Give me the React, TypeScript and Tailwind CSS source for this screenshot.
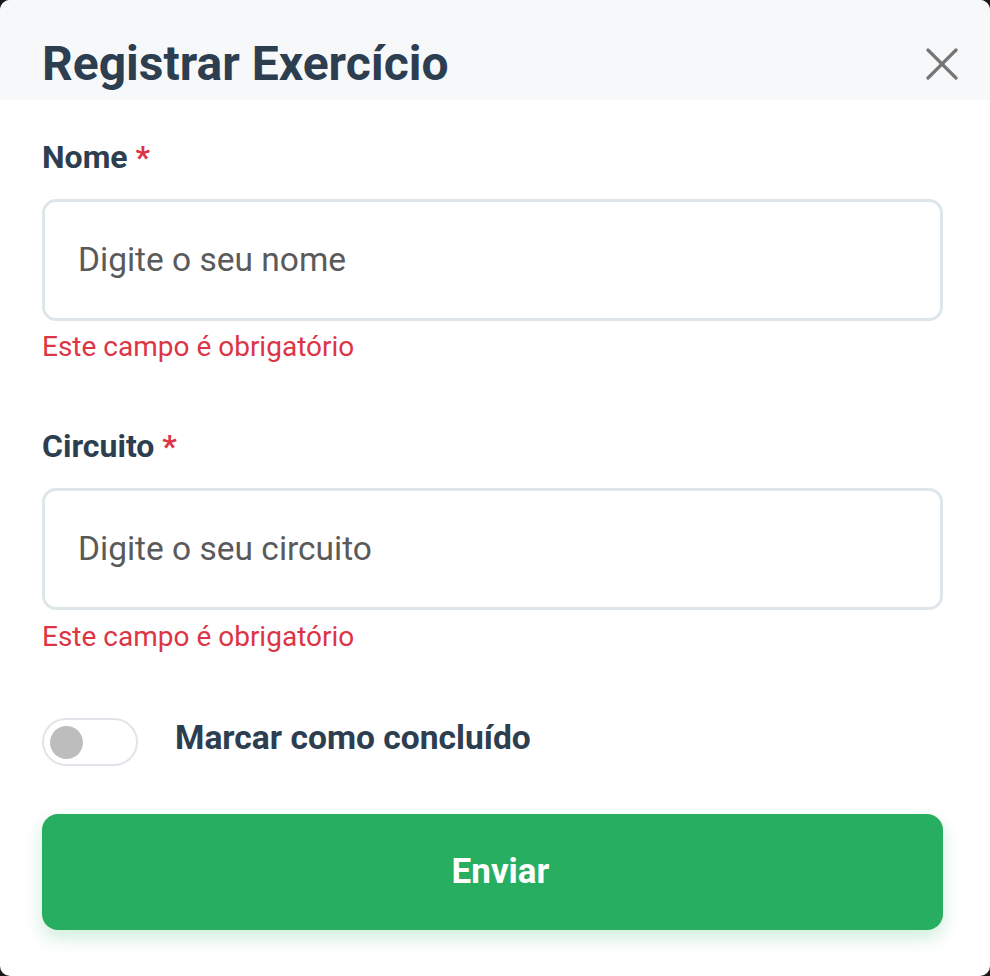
import React from "react";

export default function App() {
  return (
    <div className="w-[990px] h-[976px] bg-[#1a1a1a]" style={{ fontFamily: "Roboto, 'Noto Sans', sans-serif" }}>
      <div className="w-full h-full bg-white rounded-[10px] overflow-hidden flex flex-col">
        <div className="h-[100px] bg-[#f7f8fa] flex items-center justify-between pl-[42px] pr-[32px] pt-[28px]">
          <h1 className="text-[48px] leading-[56px] font-bold text-[#2c3e50]">Registrar Exercício</h1>
          <button className="w-[32px] h-[32px] flex items-center justify-center">
            <svg width="32" height="32" viewBox="0 0 32 32" fill="none" stroke="#757575" strokeWidth="3.2" strokeLinecap="round">
              <line x1="2" y1="2" x2="30" y2="30" />
              <line x1="30" y1="2" x2="2" y2="30" />
            </svg>
          </button>
        </div>
        <div className="flex flex-col pl-[42px] pr-[47px] pt-[39px]">
          <label className="text-[32px] leading-[36px] font-bold text-[#2c3e50]">
            Nome <span className="text-[#dc3545]">*</span>
          </label>
          <div className="mt-[24px] h-[122px] border-[3px] border-[#dfe6ea] rounded-[14px] flex items-center pl-[33px]">
            <span className="text-[33.5px] text-[#5a5a5a]">Digite o seu nome</span>
          </div>
          <p className="mt-[10px] text-[28px] leading-[32px] text-[#dc3545]">Este campo é obrigatório</p>
          <label className="mt-[65px] text-[32px] leading-[36px] font-bold text-[#2c3e50]">
            Circuito <span className="text-[#dc3545]">*</span>
          </label>
          <div className="mt-[24px] h-[122px] border-[3px] border-[#dfe6ea] rounded-[14px] flex items-center pl-[33px]">
            <span className="text-[33.5px] text-[#5a5a5a]">Digite o seu circuito</span>
          </div>
          <p className="mt-[11px] text-[28px] leading-[32px] text-[#dc3545]">Este campo é obrigatório</p>
          <div className="mt-[65px] flex items-center gap-[37px]">
            <div className="w-[96px] h-[48px] rounded-full border-[2px] border-[#e1e5ea] bg-white flex items-center pl-[6px]">
              <div className="w-[33px] h-[33px] rounded-full bg-[#bdbdbd]" />
            </div>
            <span className="mb-[8px] text-[33.6px] leading-[36px] font-bold text-[#2c3e50]">Marcar como concluído</span>
          </div>
          <button className="mt-[48px] h-[116px] w-full rounded-[16px] bg-[#27ae60] text-white text-[35px] font-bold pl-[16px] shadow-[0_8px_18px_rgba(39,174,96,0.22)]">
            Enviar
          </button>
        </div>
      </div>
    </div>
  );
}
